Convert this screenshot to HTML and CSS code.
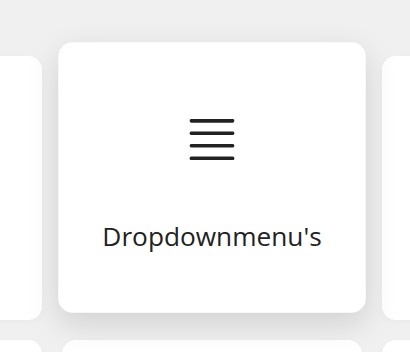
FILE: index.html
```html
<!DOCTYPE html>
<html lang="nl">
<head>
<meta charset="utf-8">
<title>Componenten</title>
<link rel="stylesheet" href="styles.css">
</head>
<body>
<div class="viewport">
  <div class="grid">
    <div class="card"></div>
    <div class="card card--active">
      <svg class="icon" viewBox="0 0 44 40" width="44" height="40" aria-hidden="true">
        <g stroke="#222" stroke-width="3.5" stroke-linecap="round">
          <line x1="1.75" y1="1.75" x2="42.25" y2="1.75"/>
          <line x1="1.75" y1="13.9" x2="42.25" y2="13.9"/>
          <line x1="1.75" y1="26.1" x2="42.25" y2="26.1"/>
          <line x1="1.75" y1="38.25" x2="42.25" y2="38.25"/>
        </g>
      </svg>
      <div class="label">Dropdownmenu's</div>
    </div>
    <div class="card"></div>
    <div class="card"></div>
    <div class="card"></div>
    <div class="card"></div>
  </div>
</div>
</body>
</html>
```

FILE: styles.css
```css
html, body {
  margin: 0;
  padding: 0;
  background: #f0f0f0;
}

.viewport {
  width: 410px;
  height: 352px;
  overflow: hidden;
}

.grid {
  display: grid;
  grid-template-columns: repeat(3, 300px);
  grid-auto-rows: 264px;
  gap: 20px;
  margin-left: -258px;
  padding-top: 56px;
  width: 940px;
}

.card {
  background: #fff;
  border-radius: 14px;
  box-shadow: 0 2px 8px rgba(0, 0, 0, 0.03);
  display: flex;
  flex-direction: column;
  align-items: center;
  padding-top: 75px;
  box-sizing: border-box;
}

.card--active {
  transform: translateY(-10.5px) scale(1.025);
  box-shadow: 0 10px 30px rgba(0, 0, 0, 0.13);
  position: relative;
  z-index: 1;
}

.icon {
  display: block;
  width: 44px;
  height: 40px;
}

.label {
  margin-top: 60px;
  font-family: "Open Sans", "Noto Sans", sans-serif;
  font-size: 25.6px;
  line-height: 1.2;
  color: #222;
}
```
